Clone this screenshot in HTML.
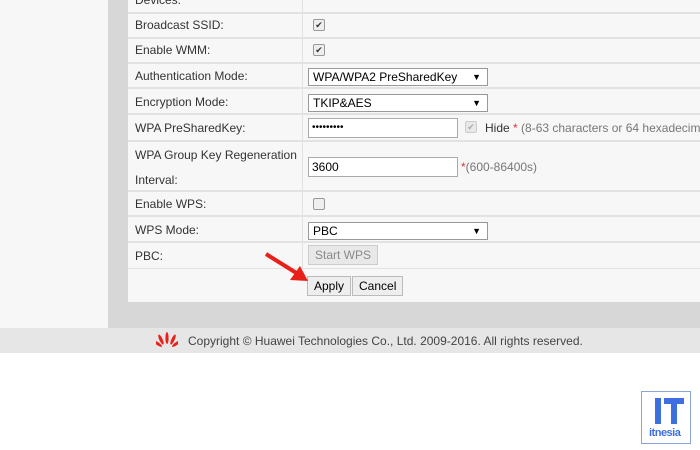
<!DOCTYPE html>
<html><head><style>
*{margin:0;padding:0;box-sizing:border-box}
body{width:700px;height:450px;background:#fff;position:relative;overflow:hidden;font-family:"Liberation Sans",Arial,sans-serif;font-size:12px;color:#333}
.abs{position:absolute;white-space:nowrap}
.row{position:absolute;left:128px;width:572px;border-bottom:2px solid #e2e2e2;overflow:hidden}
.lab{position:absolute;left:7px;white-space:nowrap}
.sel{position:absolute;left:180px;width:180px;height:18px;background:#fff;border:1px solid #999;padding-left:4px;line-height:16px;color:#000}
.sel:after{content:"▼";position:absolute;right:6px;top:0;font-size:9px}
.cb{position:absolute;left:185px;width:12px;height:12px;border:1px solid #999;border-radius:2px;background:#eee;font-size:9px;line-height:10px;text-align:center;color:#333}
.inp{position:absolute;left:180px;width:150px;height:20px;border:1px solid #aaa;background:#fff;padding-left:3px;line-height:18px;color:#000}
.btn{position:absolute;height:20px;border:1px solid #bbb;background:#eee;line-height:18px;padding:0 6px;color:#000}
</style></head><body>
<div class="abs" style="left:0;top:0;width:108px;height:328px;background:#f7f7f7"></div>
<div class="abs" style="left:108px;top:0;width:592px;height:328px;background:#d7d7d7"></div>
<div class="abs" style="left:128px;top:0;width:572px;height:302px;background:#f7f7f7"></div>
<div class="abs" style="left:302px;top:0;width:1px;height:268px;background:#e2e2e2"></div>

<div class="row" style="top:0;height:14px"><div class="lab" style="top:-7px">Devices:</div></div>
<div class="row" style="top:14px;height:25px"><div class="lab" style="top:4px">Broadcast SSID:</div><div class="cb" style="top:5px">✔</div></div>
<div class="row" style="top:39px;height:25px"><div class="lab" style="top:4px">Enable WMM:</div><div class="cb" style="top:5px">✔</div></div>
<div class="row" style="top:64px;height:25px"><div class="lab" style="top:5px">Authentication Mode:</div><div class="sel" style="top:4px">WPA/WPA2 PreSharedKey</div></div>
<div class="row" style="top:89px;height:26px"><div class="lab" style="top:6px">Encryption Mode:</div><div class="sel" style="top:5px">TKIP&amp;AES</div></div>
<div class="row" style="top:115px;height:27px"><div class="lab" style="top:6px">WPA PreSharedKey:</div><div class="inp" style="top:3px;font-size:10px">•••••••••</div>
<div class="cb" style="left:337px;top:6px;color:#aaa;background:#e8e8e8;border-color:#ccc">✔</div>
<div class="abs" style="left:357px;top:6px;color:#333">Hide <span style="color:#d33">*</span> <span style="color:#777">(8-63 characters or 64 hexadecimal characters)</span></div></div>
<div class="row" style="top:142px;height:50px"><div class="lab" style="top:1px;line-height:25px">WPA Group Key Regeneration<br>Interval:</div><div class="inp" style="top:15px">3600</div>
<div class="abs" style="left:333px;top:18px;color:#777"><span style="color:#d33">*</span>(600-86400s)</div></div>
<div class="row" style="top:192px;height:25px"><div class="lab" style="top:5px">Enable WPS:</div><div class="cb" style="top:6px"></div></div>
<div class="row" style="top:217px;height:26px"><div class="lab" style="top:6px">WPS Mode:</div><div class="sel" style="top:5px">PBC</div></div>
<div class="row" style="top:243px;height:26px;border-bottom:1px solid #e2e2e2"><div class="lab" style="top:6px">PBC:</div>
<div class="btn" style="left:180px;top:2px;color:#888;background:#e8e8e8;border-color:#ccc">Start WPS</div></div>
<div class="btn" style="left:307px;top:276px">Apply</div>
<div class="btn" style="left:352px;top:276px">Cancel</div>
<svg class="abs" style="left:262px;top:250px" width="50" height="35"><line x1="4" y1="4" x2="36" y2="24" stroke="#e8201a" stroke-width="4"/><polygon points="46,31 28,30 38,16" fill="#e8201a"/></svg>

<div class="abs" style="left:0;top:328px;width:700px;height:25px;background:#e6e6e6"></div>
<svg class="abs" style="left:156px;top:332px" width="22" height="18" viewBox="0 0 22 18"><g fill="#e8201a"><ellipse cx="11" cy="6" rx="1.6" ry="6"/><ellipse cx="7.5" cy="7" rx="1.6" ry="5.5" transform="rotate(-25 7.5 13)"/><ellipse cx="14.5" cy="7" rx="1.6" ry="5.5" transform="rotate(25 14.5 13)"/><ellipse cx="5" cy="10" rx="1.5" ry="5" transform="rotate(-55 5 14)"/><ellipse cx="17" cy="10" rx="1.5" ry="5" transform="rotate(55 17 14)"/></g></svg>
<div class="abs" style="left:188px;top:334px;color:#444">Copyright © Huawei Technologies Co., Ltd. 2009-2016. All rights reserved.</div>

<div class="abs" style="left:641px;top:391px;width:50px;height:53px;border:1px solid #8aa6d8;background:#fff"></div>
<div class="abs" style="left:655px;top:398px;width:6px;height:26px;background:#3d6fe0"></div>
<div class="abs" style="left:664px;top:398px;width:20px;height:6px;background:#3d6fe0"></div>
<div class="abs" style="left:671px;top:398px;width:6px;height:26px;background:#3d6fe0"></div>
<div class="abs" style="left:649px;top:427px;font-size:11px;color:#3d6fe0;font-weight:bold;letter-spacing:-0.5px">itnesia</div>
</body></html>
